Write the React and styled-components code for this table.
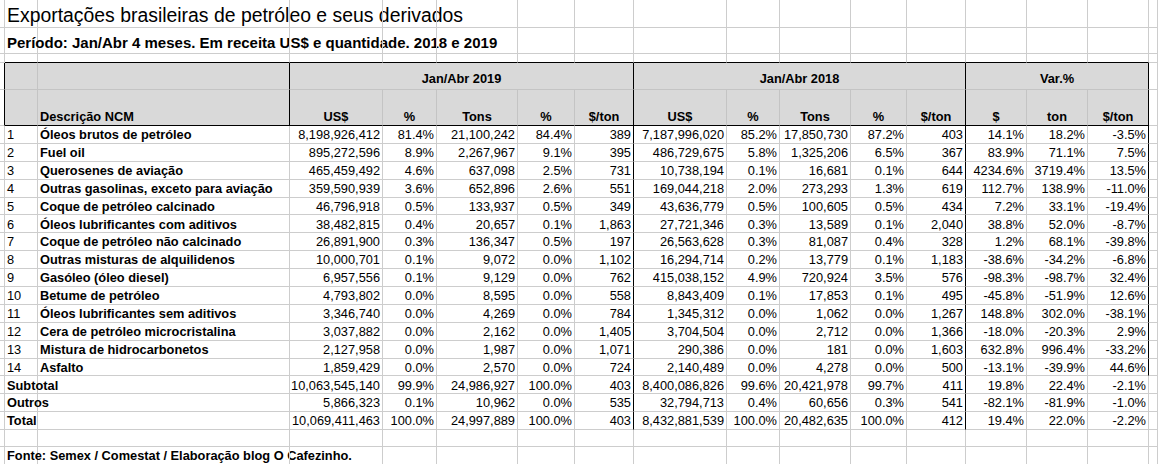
import React from 'react'
import styled, { createGlobalStyle } from 'styled-components'

const LINE = '#cdcdcd'
const HEAD_LINE = '#c4c4c4'
const INK = '#000'

const COLS = [5, 33, 252, 93, 54, 81, 57, 59, 93, 53, 71, 56, 59, 61, 61, 61, 9]

const GlobalStyle = createGlobalStyle`
  html, body {
    margin: 0;
    padding: 0;
    background: #fff;
  }
  body {
    font-family: 'Liberation Sans', Arial, sans-serif;
  }
`

const Sheet = styled.div`
  display: grid;
  grid-template-columns: ${COLS.map((w) => w + 'px').join(' ')};
  grid-template-rows: 28px 26px 9px 27px 36px repeat(17, 17.9px) 17px 18px;
  width: 1158px;
  height: 464px;
  overflow: hidden;
  font-size: 12.8px;
  line-height: 1;
  color: #000;
`

const ALIGN = { left: 'flex-start', center: 'center', right: 'flex-end' }

const Cell = styled.div`
  box-sizing: border-box;
  grid-column: span ${(p) => p.$span || 1};
  display: flex;
  align-items: flex-end;
  justify-content: ${(p) => ALIGN[p.$align || 'left']};
  padding: 0 2px 1px;
  min-width: 0;
  white-space: nowrap;
  font-weight: ${(p) => (p.$bold ? 700 : 400)};
  background: ${(p) => (p.$head ? '#d9d9d9' : 'transparent')};
  border-right: 1px solid ${(p) => (p.$edgeR ? INK : p.$head ? HEAD_LINE : LINE)};
  border-bottom: 1px solid ${(p) => (p.$edgeB ? INK : p.$head ? HEAD_LINE : LINE)};
`

const TitleCell = styled(Cell)`
  font-size: 19.4px;
  padding-bottom: 2px;
`

const SubtitleCell = styled(Cell)`
  font-size: 15px;
  font-weight: 700;
  padding-bottom: 3px;
`

const GroupCell = styled(Cell)`
  padding-bottom: 3px;
`

const ITEMS = [
  ['1', 'Óleos brutos de petróleo', '8,198,926,412', '81.4%', '21,100,242', '84.4%', '389', '7,187,996,020', '85.2%', '17,850,730', '87.2%', '403', '14.1%', '18.2%', '-3.5%'],
  ['2', 'Fuel oil', '895,272,596', '8.9%', '2,267,967', '9.1%', '395', '486,729,675', '5.8%', '1,325,206', '6.5%', '367', '83.9%', '71.1%', '7.5%'],
  ['3', 'Querosenes de aviação', '465,459,492', '4.6%', '637,098', '2.5%', '731', '10,738,194', '0.1%', '16,681', '0.1%', '644', '4234.6%', '3719.4%', '13.5%'],
  ['4', 'Outras gasolinas, exceto para aviação', '359,590,939', '3.6%', '652,896', '2.6%', '551', '169,044,218', '2.0%', '273,293', '1.3%', '619', '112.7%', '138.9%', '-11.0%'],
  ['5', 'Coque de petróleo calcinado', '46,796,918', '0.5%', '133,937', '0.5%', '349', '43,636,779', '0.5%', '100,605', '0.5%', '434', '7.2%', '33.1%', '-19.4%'],
  ['6', 'Óleos lubrificantes com aditivos', '38,482,815', '0.4%', '20,657', '0.1%', '1,863', '27,721,346', '0.3%', '13,589', '0.1%', '2,040', '38.8%', '52.0%', '-8.7%'],
  ['7', 'Coque de petróleo não calcinado', '26,891,900', '0.3%', '136,347', '0.5%', '197', '26,563,628', '0.3%', '81,087', '0.4%', '328', '1.2%', '68.1%', '-39.8%'],
  ['8', 'Outras misturas de alquilidenos', '10,000,701', '0.1%', '9,072', '0.0%', '1,102', '16,294,714', '0.2%', '13,779', '0.1%', '1,183', '-38.6%', '-34.2%', '-6.8%'],
  ['9', 'Gasóleo (óleo diesel)', '6,957,556', '0.1%', '9,129', '0.0%', '762', '415,038,152', '4.9%', '720,924', '3.5%', '576', '-98.3%', '-98.7%', '32.4%'],
  ['10', 'Betume de petróleo', '4,793,802', '0.0%', '8,595', '0.0%', '558', '8,843,409', '0.1%', '17,853', '0.1%', '495', '-45.8%', '-51.9%', '12.6%'],
  ['11', 'Óleos lubrificantes sem aditivos', '3,346,740', '0.0%', '4,269', '0.0%', '784', '1,345,312', '0.0%', '1,062', '0.0%', '1,267', '148.8%', '302.0%', '-38.1%'],
  ['12', 'Cera de petróleo microcristalina', '3,037,882', '0.0%', '2,162', '0.0%', '1,405', '3,704,504', '0.0%', '2,712', '0.0%', '1,366', '-18.0%', '-20.3%', '2.9%'],
  ['13', 'Mistura de hidrocarbonetos', '2,127,958', '0.0%', '1,987', '0.0%', '1,071', '290,386', '0.0%', '181', '0.0%', '1,603', '632.8%', '996.4%', '-33.2%'],
  ['14', 'Asfalto', '1,859,429', '0.0%', '2,570', '0.0%', '724', '2,140,489', '0.0%', '4,278', '0.0%', '500', '-13.1%', '-39.9%', '44.6%'],
]

const TOTALS = [
  ['Subtotal', '10,063,545,140', '99.9%', '24,986,927', '100.0%', '403', '8,400,086,826', '99.6%', '20,421,978', '99.7%', '411', '19.8%', '22.4%', '-2.1%'],
  ['Outros', '5,866,323', '0.1%', '10,962', '0.0%', '535', '32,794,713', '0.4%', '60,656', '0.3%', '541', '-82.1%', '-81.9%', '-1.0%'],
  ['Total', '10,069,411,463', '100.0%', '24,997,889', '100.0%', '403', '8,432,881,539', '100.0%', '20,482,635', '100.0%', '412', '19.4%', '22.0%', '-2.2%'],
]

const SUB_HEADS = ['US$', '%', 'Tons', '%', '$/ton', 'US$', '%', 'Tons', '%', '$/ton', '$', 'ton', '$/ton']

// group edges fall after the 5th, 10th and 13th value column
const isEdge = (i) => i === 4 || i === 9 || i === 12

const Blank = ({ count, ...rest }) =>
  Array.from({ length: count }, (_, i) => <Cell key={i} {...rest} />)

const Values = ({ values, lastEdge }) =>
  values.map((v, i) => (
    <Cell key={i} $align='right' $edgeR={i === 4 || i === 9 || (lastEdge && i === 12)}>
      {v}
    </Cell>
  ))

const ItemRow = ({ item }) => {
  const [n, label, ...values] = item
  return (
    <>
      <Cell />
      <Cell>{n}</Cell>
      <Cell $bold>{label}</Cell>
      <Values values={values} lastEdge />
      <Cell />
    </>
  )
}

const TotalRow = ({ item }) => {
  const [label, ...values] = item
  return (
    <>
      <Cell />
      <Cell $bold>{label}</Cell>
      <Cell />
      <Values values={values} />
      <Cell />
    </>
  )
}

const App = () => {
  return (
    <>
      <GlobalStyle />
      <Sheet>
        <Cell />
        <TitleCell>Exportações brasileiras de petróleo e seus derivados</TitleCell>
        <Blank count={15} />

        <Cell />
        <SubtitleCell>Período: Jan/Abr 4 meses. Em receita US$ e quantidade. 2018 e 2019</SubtitleCell>
        <Blank count={15} />

        <Cell />
        <Blank count={15} $edgeB />
        <Cell />

        <Cell $edgeR />
        <Cell $head />
        <Cell $head $edgeR />
        <GroupCell $head $bold $span={5} $align='center' $edgeR>Jan/Abr 2019</GroupCell>
        <GroupCell $head $bold $span={5} $align='center' $edgeR>Jan/Abr 2018</GroupCell>
        <GroupCell $head $bold $span={3} $align='center' $edgeR>Var.%</GroupCell>
        <Cell />

        <Cell $edgeR />
        <Cell $head $edgeB />
        <Cell $head $bold $edgeB $edgeR>Descrição NCM</Cell>
        {SUB_HEADS.map((h, i) => (
          <Cell key={i} $head $bold $edgeB $edgeR={isEdge(i)} $align='center'>
            {h}
          </Cell>
        ))}
        <Cell />

        {ITEMS.map((item) => (
          <ItemRow key={item[0]} item={item} />
        ))}
        {TOTALS.map((item) => (
          <TotalRow key={item[0]} item={item} />
        ))}

        <Blank count={17} />

        <Cell />
        <Cell $bold>Fonte: Semex / Comestat / Elaboração blog O Cafezinho.</Cell>
        <Blank count={15} />
      </Sheet>
    </>
  )
}

export default App
